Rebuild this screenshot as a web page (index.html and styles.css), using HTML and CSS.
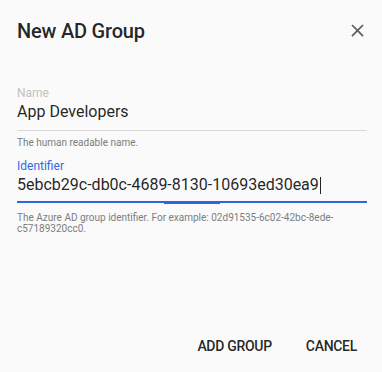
FILE: index.html
```html
<!DOCTYPE html>
<html>
<head>
<meta charset="utf-8">
<link rel="stylesheet" href="styles.css">
</head>
<body>
<div class="dialog">
  <div class="header">
    <h1 class="title">New AD Group</h1>
    <svg class="close" viewBox="0 0 24 24" width="21" height="21"><path d="M19 6.41L17.59 5 12 10.59 6.41 5 5 6.41 10.59 12 5 17.59 6.41 19 12 13.41 17.59 19 19 17.59 13.41 12z"/></svg>
  </div>
  <div class="field first">
    <div class="label">Name</div>
    <div class="value">App Developers</div>
    <div class="hint">The human readable name.</div>
  </div>
  <div class="field second">
    <div class="label focused">Identifier</div>
    <div class="value focused-line">5ebcb29c-db0c-4689-8130-10693ed30ea9<span class="caret"></span></div>
    <div class="hint two">The Azure AD group identifier. For example: 02d91535-6c02-42bc-8ede-c57189320cc0.</div>
  </div>
  <div class="actions">
    <button class="btn">ADD GROUP</button>
    <button class="btn">CANCEL</button>
  </div>
</div>
</body>
</html>
```
FILE: styles.css
```css
html, body {
  margin: 0;
  padding: 0;
  background: #fafafa;
  height: 100%;
}
body {
  font-family: Roboto, "Noto Sans", sans-serif;
  color: rgba(0,0,0,.87);
}
.dialog {
  box-sizing: border-box;
  height: 372px;
  padding: 15px 15px 8px 17px;
  display: flex;
  flex-direction: column;
}
.header {
  display: flex;
  align-items: center;
  justify-content: space-between;
  height: 32px;
}
.title {
  margin: 0;
  font-size: 20px;
  line-height: 32px;
  font-weight: 500;
  letter-spacing: -0.2px;
}
.close {
  fill: #5f5f5f;
  margin-top: -2px;
  margin-right: -0.5px;
}
.field.first { margin-top: 39px; }
.field.second { margin-top: 10.5px; }
.label {
  font-size: 12px;
  line-height: 14px;
  color: #c2c2c2;
}
.label.focused { color: #3468e0; }
.value {
  margin-top: 1.5px;
  font-size: 16px;
  line-height: 20px;
  padding-bottom: 8.5px;
  border-bottom: 1px solid #d9d9d9;
}
.value.focused-line {
  padding-bottom: 6.5px;
  border-bottom: 2px solid #2b67de;
  position: relative;
}
.value.focused-line::after {
  content: "";
  position: absolute;
  left: 147px;
  width: 56px;
  bottom: -3px;
  height: 1px;
  background: #2b67de;
}
.caret {
  display: inline-block;
  width: 1px;
  height: 17px;
  background: #222;
  vertical-align: -4px;
  margin-left: 1px;
}
.hint {
  margin-top: 5.5px;
  font-size: 10px;
  line-height: 12px;
  color: #7d7d7d;
}
.hint.two {
  margin-top: 8.5px;
  line-height: 11px;
  padding-right: 20px;
}
.actions {
  margin-top: auto;
  display: flex;
  justify-content: flex-end;
  gap: 14px;
}
.btn {
  font-family: Roboto, sans-serif;
  font-size: 14px;
  font-weight: 500;
  letter-spacing: -0.3px;
  line-height: 36px;
  height: 36px;
  padding: 0 10px;
  border: 0;
  background: transparent;
  color: rgba(0,0,0,.87);
}
```
